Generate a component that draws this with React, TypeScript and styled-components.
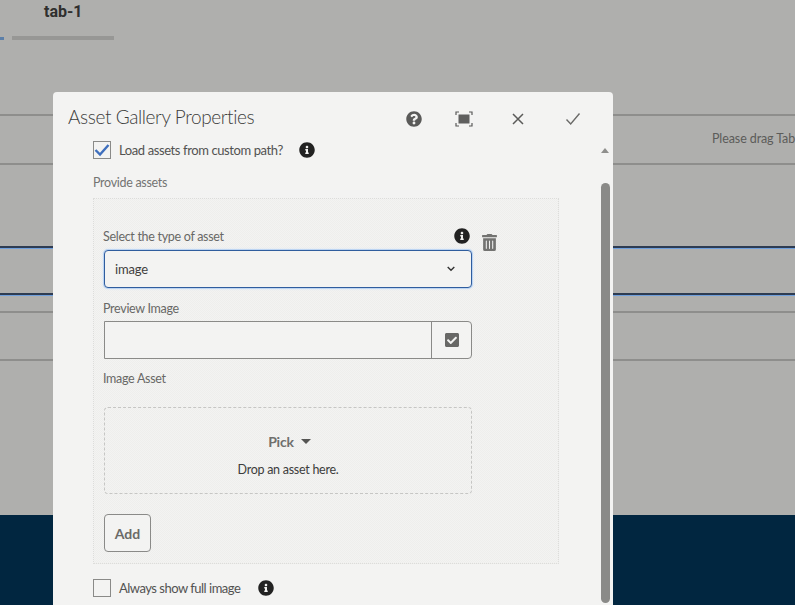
import React from "react";
import styled, { createGlobalStyle } from "styled-components";
import { FaInfoCircle, FaQuestionCircle, FaCheckSquare, FaTrashAlt } from "react-icons/fa";

const Global = createGlobalStyle`
  html, body { margin: 0; padding: 0; }
  body { background: #afafad; font-family: "Lato", "Open Sans", sans-serif; }
`;

const Page = styled.div`
  position: relative;
  width: 795px;
  height: 605px;
  overflow: hidden;
  background: #afafad;
`;

const TabHeader = styled.div`
  height: 114px;
  box-sizing: border-box;
  padding-top: 3px;
`;

const TabTitle = styled.div`
  margin-left: 44px;
  font: 700 16px/17px "Roboto", sans-serif;
  color: #2f2f2e;
`;

const TabRail = styled.div`
  display: flex;
  gap: 8px;
  margin-top: 16px;
`;

const TabMark = styled.div<{ $w: number; $h: number; $c: string }>`
  width: ${(p) => p.$w}px;
  height: ${(p) => p.$h}px;
  background: ${(p) => p.$c};
  align-self: center;
`;

const Row = styled.div<{ $h: number; $line: "grey" | "blue" | "none" }>`
  height: ${(p) => p.$h}px;
  box-sizing: border-box;
  border-top: ${(p) => (p.$line === "grey" ? "2px solid #8e8e8c" : p.$line === "blue" ? "2px solid #2e3c52" : "none")};
  box-shadow: ${(p) => (p.$line === "blue" ? "inset 0 1px 0 #6f9fdc" : "none")};
  display: flex;
  align-items: center;
  white-space: nowrap;
`;

const HintText = styled.span`
  margin: -3px 0 0 712px;
  font-size: 12.5px;
  letter-spacing: -0.1px;
  color: #5c5c5a;
`;

const Footer = styled.div`
  height: 90px;
  background: #012640;
`;

const Dialog = styled.div`
  position: absolute;
  left: 53px;
  top: 92px;
  width: 560px;
  height: 513px;
  background: #f3f3f2;
  border-radius: 4px 4px 0 0;
  overflow: hidden;
`;

const DialogHeader = styled.div`
  display: flex;
  align-items: center;
  height: 49px;
  padding: 0 0 0 15px;
  box-sizing: border-box;
`;

const DialogTitle = styled.div`
  flex: 1;
  font-size: 19px;
  font-weight: 300;
  letter-spacing: -0.4px;
  color: #3d3d3c;
`;

const HeaderIcons = styled.div`
  display: flex;
  align-items: center;
  margin: 4px 14px 0 0;
  color: #5a5a59;
`;

const HeaderIconSlot = styled.div<{ $w: number }>`
  width: ${(p) => p.$w}px;
  display: flex;
  justify-content: center;
`;

const Content = styled.div`
  width: 466px;
  margin-left: 40px;
`;

const CheckRow = styled.div<{ $mt?: number }>`
  display: flex;
  align-items: center;
  height: 18px;
  margin-top: ${(p) => p.$mt ?? 0}px;
`;

const CheckBox = styled.div`
  width: 16px;
  height: 16px;
  border: 1px solid #8a8a88;
  display: flex;
  align-items: center;
  justify-content: center;
  flex: none;
`;

const CheckLabel = styled.span<{ $tight?: boolean }>`
  margin-left: 8px;
  font-size: 13px;
  letter-spacing: ${(p) => (p.$tight ? "-0.5px" : "-0.4px")};
  color: #525251;
`;

const InfoWrap = styled.span<{ $ml: number }>`
  display: inline-flex;
  margin-left: ${(p) => p.$ml}px;
  color: #222;
`;

const GroupLabel = styled.div`
  margin-top: 16px;
  height: 15px;
  font-size: 12.5px;
  line-height: 15px;
  letter-spacing: -0.3px;
  color: #747472;
`;

const Panel = styled.div`
  position: relative;
  margin-top: 8px;
  height: 366px;
  box-sizing: border-box;
  padding: 31px 0 0 10px;
  border: 1px dotted #dcdcda;
  background: repeating-conic-gradient(#eeeeec 0 25%, #f3f3f2 0 50%) 0 0 / 2px 2px;
`;

const Field = styled.div`
  width: 368px;
`;

const FieldLabelRow = styled.div`
  display: flex;
  align-items: center;
  justify-content: space-between;
  height: 14px;
`;

const FieldLabel = styled.label`
  margin-left: -1px;
  font-size: 12.5px;
  line-height: 14px;
  letter-spacing: -0.3px;
  color: #686866;
`;

const FloatIcon = styled.span`
  position: absolute;
  left: 360px;
  top: 29px;
  color: #222;
  display: flex;
`;

const TrashIcon = styled.span`
  position: absolute;
  left: 387px;
  top: 35px;
  color: #737371;
  display: flex;
`;

const SelectBox = styled.div`
  margin-top: 6px;
  height: 38px;
  box-sizing: border-box;
  border: 1px solid #2f5d9e;
  border-radius: 4px;
  box-shadow: 0 0 0 1px #bcd4f2, 0 0 2px 1px #d3e2f5;
  background: #f3f3f2;
  display: flex;
  align-items: center;
  justify-content: space-between;
  padding: 0 16px 0 10px;
  font-size: 13px;
  letter-spacing: -0.2px;
  color: #3f3f3e;
`;

const InputGroup = styled.div`
  margin-top: 5px;
  height: 38px;
  box-sizing: border-box;
  border: 1px solid #8a8a88;
  border-radius: 0 4px 4px 0;
  background: #f3f3f2;
  display: flex;
`;

const InputField = styled.div`
  flex: 1;
`;

const InputButton = styled.div`
  width: 39px;
  border-left: 1px solid #8a8a88;
  display: flex;
  align-items: center;
  justify-content: center;
  color: #686866;
`;

const LabelGap = styled.div<{ $mt: number }>`
  margin-top: ${(p) => p.$mt}px;
`;

const DropZone = styled.div`
  margin-top: 21px;
  height: 87px;
  box-sizing: border-box;
  border: 1px dashed #c6c6c4;
  border-radius: 4px;
  display: flex;
  flex-direction: column;
  align-items: center;
  padding-top: 23px;
`;

const PickRow = styled.div`
  display: flex;
  align-items: center;
  gap: 7px;
  height: 20px;
  margin-left: 3px;
  font-size: 14px;
  font-weight: 700;
  letter-spacing: -0.2px;
  color: #6f6f6d;
`;

const Caret = styled.span`
  width: 0;
  height: 0;
  border-left: 5px solid transparent;
  border-right: 5px solid transparent;
  border-top: 5px solid #555553;
`;

const DropText = styled.div`
  margin-top: 11px;
  font-size: 12.5px;
  line-height: 15px;
  letter-spacing: -0.27px;
  color: #3d3d3c;
`;

const AddButton = styled.button`
  display: block;
  margin-top: 20px;
  width: 47px;
  height: 38px;
  padding: 0;
  border: 1px solid #8a8a88;
  border-radius: 4px;
  background: #f3f3f2;
  font: 700 14px "Lato", sans-serif;
  color: #6a6a68;
`;

const ScrollArrow = styled.span`
  position: absolute;
  left: 548px;
  top: 56px;
  width: 0;
  height: 0;
  border-left: 4.5px solid transparent;
  border-right: 4.5px solid transparent;
  border-bottom: 5px solid #8f8f8d;
`;

const ScrollThumb = styled.div`
  position: absolute;
  left: 548px;
  top: 91px;
  width: 9px;
  height: 420px;
  border-radius: 5px;
  background: #8a8a88;
`;

const FullscreenIcon = () => (
  <svg width="18" height="16" viewBox="0 0 18 16" fill="none">
    <path d="M1 4V1h3M14 1h3v3M17 12v3h-3M4 15H1v-3" stroke="#5a5a59" strokeWidth="1.2" />
    <rect x="3.5" y="3.5" width="11" height="9" fill="#5f5f5e" />
  </svg>
);

const CloseIcon = () => (
  <svg width="14" height="14" viewBox="0 0 14 14">
    <path d="M2 2l10 10M12 2L2 12" stroke="#5a5a59" strokeWidth="1.5" fill="none" />
  </svg>
);

const DoneIcon = () => (
  <svg width="16" height="14" viewBox="0 0 16 14">
    <path d="M1.5 7.5l4.2 4.5L14.5 1.5" stroke="#6a6a68" strokeWidth="1.4" fill="none" />
  </svg>
);

const BlueCheck = () => (
  <svg width="16" height="14" viewBox="0 0 16 14">
    <path d="M1.5 7l4.5 4.5L14.5 2" stroke="#3f6fbd" strokeWidth="2.4" fill="none" />
  </svg>
);

const Chevron = () => (
  <svg width="8" height="6" viewBox="0 0 8 6">
    <path d="M0.7 1L4 4.3L7.3 1" stroke="#333" strokeWidth="1.4" fill="none" />
  </svg>
);

export default function App() {
  return (
    <Page>
      <Global />
      <TabHeader>
        <TabTitle>tab-1</TabTitle>
        <TabRail>
          <TabMark $w={4} $h={3} $c="#5c7fa8" />
          <TabMark $w={102} $h={4} $c="#979795" />
        </TabRail>
      </TabHeader>
      <Row $h={49} $line="grey">
        <HintText>Please drag Tab</HintText>
      </Row>
      <Row $h={83} $line="grey" />
      <Row $h={47} $line="blue" />
      <Row $h={18} $line="blue" />
      <Row $h={48} $line="grey" />
      <Row $h={156} $line="grey" />
      <Footer />
      <Dialog>
        <DialogHeader>
          <DialogTitle>Asset Gallery Properties</DialogTitle>
          <HeaderIcons>
            <HeaderIconSlot $w={50}><FaQuestionCircle size={16} /></HeaderIconSlot>
            <HeaderIconSlot $w={50}><FullscreenIcon /></HeaderIconSlot>
            <HeaderIconSlot $w={58}><CloseIcon /></HeaderIconSlot>
            <HeaderIconSlot $w={52}><DoneIcon /></HeaderIconSlot>
          </HeaderIcons>
        </DialogHeader>
        <Content>
          <CheckRow>
            <CheckBox><BlueCheck /></CheckBox>
            <CheckLabel>Load assets from custom path?</CheckLabel>
            <InfoWrap $ml={16}><FaInfoCircle size={16} /></InfoWrap>
          </CheckRow>
          <GroupLabel>Provide assets</GroupLabel>
          <Panel>
            <FloatIcon><FaInfoCircle size={16} /></FloatIcon>
            <TrashIcon><FaTrashAlt size={17} /></TrashIcon>
            <Field>
              <FieldLabelRow><FieldLabel>Select the type of asset</FieldLabel></FieldLabelRow>
              <SelectBox>image<Chevron /></SelectBox>
              <LabelGap $mt={14}>
                <FieldLabelRow><FieldLabel>Preview Image</FieldLabel></FieldLabelRow>
              </LabelGap>
              <InputGroup>
                <InputField />
                <InputButton><FaCheckSquare size={16} /></InputButton>
              </InputGroup>
              <LabelGap $mt={13}>
                <FieldLabelRow><FieldLabel>Image Asset</FieldLabel></FieldLabelRow>
              </LabelGap>
              <DropZone>
                <PickRow>Pick <Caret /></PickRow>
                <DropText>Drop an asset here.</DropText>
              </DropZone>
              <AddButton>Add</AddButton>
            </Field>
          </Panel>
          <CheckRow $mt={15}>
            <CheckBox />
            <CheckLabel $tight>Always show full image</CheckLabel>
            <InfoWrap $ml={18}><FaInfoCircle size={16} /></InfoWrap>
          </CheckRow>
        </Content>
        <ScrollArrow />
        <ScrollThumb />
      </Dialog>
    </Page>
  );
}
